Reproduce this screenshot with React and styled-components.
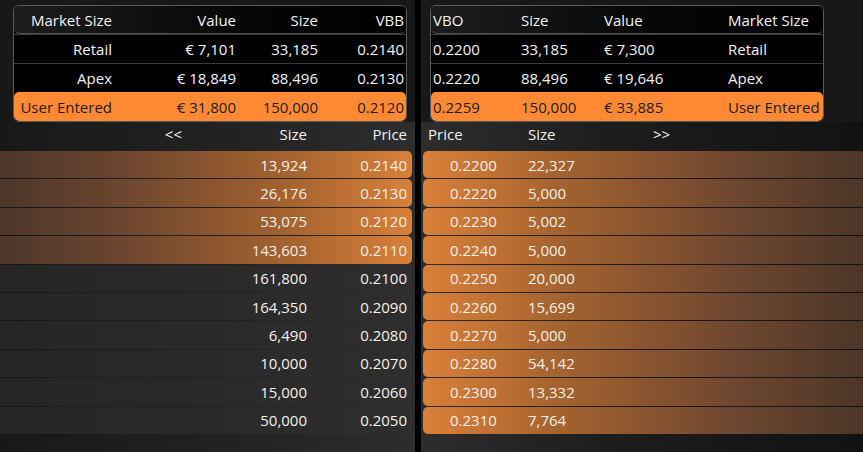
import React from "react";
import styled, { createGlobalStyle } from "styled-components";

const GlobalStyle = createGlobalStyle`
  html, body {
    margin: 0;
    padding: 0;
    background: #111;
  }
  body {
    font-family: "Open Sans", "Liberation Sans", sans-serif;
    font-size: 15px;
    color: #f2f2f2;
  }
`;

const bidSummary = {
  cols: ["Market Size", "Value", "Size", "VBB"],
  rows: [
    ["Retail", "€ 7,101", "33,185", "0.2140"],
    ["Apex", "€ 18,849", "88,496", "0.2130"],
    ["User Entered", "€ 31,800", "150,000", "0.2120"],
  ],
};

const askSummary = {
  cols: ["VBO", "Size", "Value", "Market Size"],
  rows: [
    ["0.2200", "33,185", "€ 7,300", "Retail"],
    ["0.2220", "88,496", "€ 19,646", "Apex"],
    ["0.2259", "150,000", "€ 33,885", "User Entered"],
  ],
};

const bids = [
  ["13,924", "0.2140", true],
  ["26,176", "0.2130", true],
  ["53,075", "0.2120", true],
  ["143,603", "0.2110", true],
  ["161,800", "0.2100"],
  ["164,350", "0.2090"],
  ["6,490", "0.2080"],
  ["10,000", "0.2070"],
  ["15,000", "0.2060"],
  ["50,000", "0.2050"],
];

const asks = [
  ["0.2200", "22,327"],
  ["0.2220", "5,000"],
  ["0.2230", "5,002"],
  ["0.2240", "5,000"],
  ["0.2250", "20,000"],
  ["0.2260", "15,699"],
  ["0.2270", "5,000"],
  ["0.2280", "54,142"],
  ["0.2300", "13,332"],
  ["0.2310", "7,764"],
];

export default function App() {
  return (
    <>
      <GlobalStyle />
      <Page>
        <Panel $side="bid">
          <TopArea>
            <Summary $left={13}>
              <SumHeader $cols="100px 124px 82px 1fr">
                {bidSummary.cols.map((c) => (
                  <SumCell key={c} $align="right">{c}</SumCell>
                ))}
              </SumHeader>
              {bidSummary.rows.map((r, i) => (
                <SumRow key={i} $cols="100px 124px 82px 1fr" $mine={i === 2}>
                  {r.map((v, j) => (
                    <SumCell key={j} $align="right">{v}</SumCell>
                  ))}
                </SumRow>
              ))}
            </Summary>
          </TopArea>
          <BookHeader $cols="1fr 100px 100px" $pad="0 8px 0 0">
            <HeadCell $align="right" $extra="0 25px 0 0">&lt;&lt;</HeadCell>
            <HeadCell $align="right">Size</HeadCell>
            <HeadCell $align="right">Price</HeadCell>
          </BookHeader>
          <Rows>
            {bids.map(([size, price, hot], i) => (
              <BidRow key={i} $hot={hot}>
                <span />
                <BookCell $align="right">{size}</BookCell>
                <BookCell $align="right">{price}</BookCell>
              </BidRow>
            ))}
          </Rows>
        </Panel>
        <Divider />
        <Panel $side="ask">
          <TopArea>
            <Summary $left={9}>
              <SumHeader $cols="88px 83px 124px 1fr">
                {askSummary.cols.map((c) => (
                  <SumCell key={c} $align="left">{c}</SumCell>
                ))}
              </SumHeader>
              {askSummary.rows.map((r, i) => (
                <SumRow key={i} $cols="88px 83px 124px 1fr" $mine={i === 2}>
                  {r.map((v, j) => (
                    <SumCell key={j} $align="left">{v}</SumCell>
                  ))}
                </SumRow>
              ))}
            </Summary>
          </TopArea>
          <BookHeader $cols="100px 125px 1fr" $pad="0 0 0 7px">
            <HeadCell $align="left">Price</HeadCell>
            <HeadCell $align="left">Size</HeadCell>
            <HeadCell $align="left">&gt;&gt;</HeadCell>
          </BookHeader>
          <Rows>
            {asks.map(([price, size], i) => (
              <AskRow key={i}>
                <BookCell $align="left">{price}</BookCell>
                <BookCell $align="left">{size}</BookCell>
              </AskRow>
            ))}
          </Rows>
        </Panel>
      </Page>
    </>
  );
}

// -----------Style--------------

const Page = styled.div`
  display: flex;
  width: 863px;
  height: 452px;
  overflow: hidden;
`;

const Panel = styled.div`
  display: flex;
  flex-direction: column;
  width: ${(p) => (p.$side === "bid" ? "415px" : "auto")};
  flex: ${(p) => (p.$side === "bid" ? "none" : "1")};
  overflow: hidden;
  background: ${(p) =>
    p.$side === "bid"
      ? "linear-gradient(to right, #181818 0%, #222 55%, #2d2d2d 100%)"
      : "linear-gradient(to right, #2d2d2d 0%, #1c1c1c 45%, #121212 100%)"};
`;

const Divider = styled.div`
  width: 6px;
  flex: none;
  background: #000;
`;

const TopArea = styled.div`
  padding: 5px 0 0;
  background: #181818;
`;

const Summary = styled.div`
  margin-left: ${(p) => p.$left}px;
  width: 392px;
  border: 1px solid #5a5a5a;
  border-radius: 6px;
  background: #000;
  overflow: hidden;
`;

const SumHeader = styled.div`
  display: grid;
  grid-template-columns: ${(p) => p.$cols};
  align-items: center;
  height: 27px;
  border-bottom: 1px solid #4f4f4f;
  border-radius: 0 0 6px 6px;
  background: linear-gradient(to right, #1d1d1d 0%, #050505 60%, #000 100%);
`;

const SumRow = styled.div`
  display: grid;
  grid-template-columns: ${(p) => p.$cols};
  align-items: center;
  height: 28px;
  border-top: ${(p) => (p.$mine ? "none" : "1px solid #3c3c3c")};
  ${(p) =>
    p.$mine &&
    `
    height: 29px;
    background: #ff8a33;
    color: #1c1c1c;
    border-radius: 5px;
  `}
`;

const SumCell = styled.div`
  padding: 0 2px;
  text-align: ${(p) => p.$align};
  white-space: nowrap;
`;

const BookHeader = styled.div`
  display: grid;
  grid-template-columns: ${(p) => p.$cols};
  align-items: center;
  height: 24px;
  padding: ${(p) => p.$pad};
`;

const HeadCell = styled.div`
  text-align: ${(p) => p.$align};
  padding: ${(p) => p.$extra || "0"};
  color: #f0f0f0;
`;

const Rows = styled.div`
  display: flex;
  flex-direction: column;
  gap: 1px;
  padding-top: 5px;
`;

const BidRow = styled.div`
  display: grid;
  grid-template-columns: 1fr 100px 100px;
  align-items: center;
  height: 27.4px;
  margin-right: 3px;
  padding-right: 5px;
  border-radius: 0 5px 5px 0;
  background: ${(p) =>
    p.$hot
      ? "linear-gradient(to right, #4c3629 0%, #6d4630 30%, #a5632f 70%, #d9803a 100%)"
      : "linear-gradient(to right, #252525 0%, #2e2e2e 100%)"};
`;

const AskRow = styled.div`
  display: grid;
  grid-template-columns: 78px 1fr;
  align-items: center;
  height: 27.4px;
  margin: 0 -8px 0 2px;
  padding-left: 27px;
  border-radius: 5px;
  background: linear-gradient(to right, #da8039 0%, #a5632f 30%, #6d4630 70%, #4a3527 100%);
`;

const BookCell = styled.div`
  text-align: ${(p) => p.$align};
  color: #f6f0ea;
  white-space: nowrap;
`;
